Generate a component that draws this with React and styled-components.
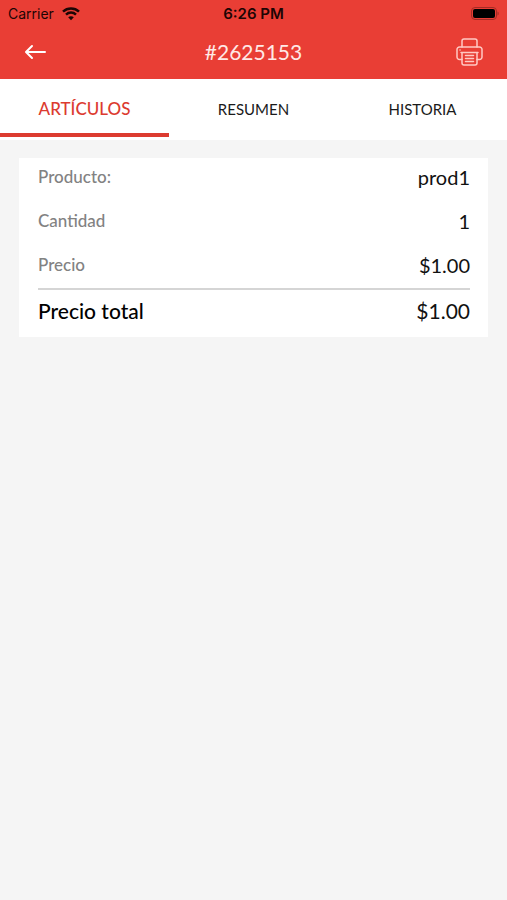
import React, { useState } from "react";
import styled, { createGlobalStyle } from "styled-components";

const RED = "#e93e35";

const GlobalStyle = createGlobalStyle`
  * { box-sizing: border-box; }
  body { margin: 0; background: #f5f5f5; }
  button { font: inherit; border: 0; padding: 0; background: none; cursor: pointer; }
`;

const Screen = styled.div`
  min-height: 100vh;
  background: #f5f5f5;
  color: #111;
  font-family: Lato, "Open Sans", sans-serif;
`;

const Header = styled.header`
  background: ${RED};
`;

const StatusBar = styled.div`
  display: grid;
  grid-template-columns: 1fr auto 1fr;
  align-items: center;
  height: 28px;
  padding: 0 8px;
  color: #1c0504;
  font: 400 14px/20px Inter, Roboto, sans-serif;
`;

const Carrier = styled.div`
  display: flex;
  align-items: center;
  gap: 8px;
`;

const Clock = styled.time`
  font-size: 15px;
  font-weight: 600;
`;

const BatteryIcon = styled.svg`
  justify-self: end;
`;

const NavBar = styled.div`
  display: grid;
  grid-template-columns: 1fr auto 1fr;
  align-items: center;
  height: 51px;
  padding: 0 24px 4px;
  color: #fff;
`;

const Title = styled.h1`
  margin: 0;
  font-size: 21px;
  font-weight: 400;
  line-height: 28px;
  color: #ffe9e6;
`;

const IconButton = styled.button`
  display: flex;
  color: ${(p) => (p.$end ? "#ffc9c3" : "#fff")};
  justify-self: ${(p) => (p.$end ? "end" : "start")};
`;

const Tabs = styled.div`
  display: grid;
  grid-template-columns: repeat(3, 1fr);
  height: 61px;
  padding-bottom: 3px;
  background: #fff;
`;

const Tab = styled.button`
  && {
    padding-top: 5px;
    border-bottom: 4px solid ${(p) => (p.$active ? "#dc3b30" : "transparent")};
    color: ${(p) => (p.$active ? "#dc3b30" : "#1a1a1a")};
    font-size: ${(p) => (p.$active ? 17 : 15)}px;
    font-weight: ${(p) => (p.$active ? 500 : 400)};
    line-height: 24px;
  }
`;

const Card = styled.dl`
  margin: 18px 19px;
  padding: 0 18px 5px 19px;
  background: #fff;
`;

const Row = styled.div`
  display: flex;
  align-items: center;
  justify-content: space-between;
  height: ${(p) => (p.$total ? 44 : 38)}px;
  border-top: ${(p) => (p.$total ? "2px solid #d5d5d5" : "0")};
  line-height: 28px;

  &:not(:first-child) {
    margin-top: ${(p) => (p.$total ? 4 : 6)}px;
  }
`;

const Label = styled.dt`
  color: ${(p) => (p.$total ? "#000" : "#828282")};
  font-size: ${(p) => (p.$total ? 21 : 17)}px;
  font-weight: 500;
`;

const Value = styled.dd`
  margin: 0;
  color: #111;
  font-size: ${(p) => (p.$total ? 21 : 20)}px;
`;

const tabs = ["ARTÍCULOS", "RESUMEN", "HISTORIA"];
const rows = [
  { label: "Producto:", value: "prod1" },
  { label: "Cantidad", value: "1" },
  { label: "Precio", value: "$1.00" },
  { label: "Precio total", value: "$1.00", total: true },
];

function Wifi() {
  return (
    <svg width="18" height="14" viewBox="0 0 18 14" fill="none" stroke="currentColor" strokeWidth="2.5" aria-hidden="true">
      <path d="M1 4.600C5.500.4 12.500.4 17 4.600M4 7.600c2.800-2.700 7.200-2.700 10 0" />
      <path d="M6.200 10.300c1.500-1.500 4.100-1.500 5.600 0L9 13.200z" fill="currentColor" stroke="none" />
    </svg>
  );
}

function Battery() {
  return (
    <BatteryIcon width="29" height="14" viewBox="0 0 29 14" aria-hidden="true">
      <rect x="1.5" y=".5" width="25" height="12" rx="3.5" fill="none" stroke="#a42c25" />
      <rect x="3" y="2" width="22" height="9" rx="2" fill="#000" />
      <path d="M27.500 4.500v4c1.600-.5 1.600-3.500 0-4z" fill="#a42c25" />
    </BatteryIcon>
  );
}

function BackArrow() {
  return (
    <svg width="24" height="20" viewBox="0 0 24 20" fill="none" stroke="currentColor" strokeWidth="2" strokeLinecap="round" strokeLinejoin="round" aria-hidden="true">
      <path d="M21 10H3M8 4l-6 6 6 6" />
    </svg>
  );
}

function Printer() {
  return (
    <svg width="27" height="28" viewBox="0 0 27 28" fill="none" stroke="currentColor" strokeWidth="1.5" strokeLinejoin="round" strokeLinecap="round" aria-hidden="true">
      <path d="M6 9V3a2 2 0 0 1 2-2h11a2 2 0 0 1 2 2v6" />
      <path d="M6 21.500H3.500A2.500 2.500 0 0 1 1 19v-7.500A2.500 2.500 0 0 1 3.500 9h20a2.500 2.500 0 0 1 2.500 2.500V19a2.500 2.500 0 0 1-2.500 2.500H21" />
      <path d="M5 14.500h17M6 14.500v10.500A2 2 0 0 0 8 27h11a2 2 0 0 0 2-2v-10.500M9.500 17.500h8M9.500 20.500h8M9.500 23.500h8M4 12h.1" />
    </svg>
  );
}

export default function App() {
  const [active, setActive] = useState(0);
  return (
    <Screen>
      <GlobalStyle />
      <Header>
        <StatusBar>
          <Carrier>
            <span>Carrier</span>
            <Wifi />
          </Carrier>
          <Clock>6:26 PM</Clock>
          <Battery />
        </StatusBar>
        <NavBar>
          <IconButton type="button" aria-label="Volver">
            <BackArrow />
          </IconButton>
          <Title>#2625153</Title>
          <IconButton type="button" aria-label="Imprimir" $end>
            <Printer />
          </IconButton>
        </NavBar>
      </Header>
      <Tabs role="tablist">
        {tabs.map((name, i) => (
          <Tab key={name} type="button" role="tab" aria-selected={i === active} $active={i === active} onClick={() => setActive(i)}>
            {name}
          </Tab>
        ))}
      </Tabs>
      <main>
        <Card>
          {rows.map((row) => (
            <Row key={row.label} $total={row.total}>
              <Label $total={row.total}>{row.label}</Label>
              <Value $total={row.total}>{row.value}</Value>
            </Row>
          ))}
        </Card>
      </main>
    </Screen>
  );
}
